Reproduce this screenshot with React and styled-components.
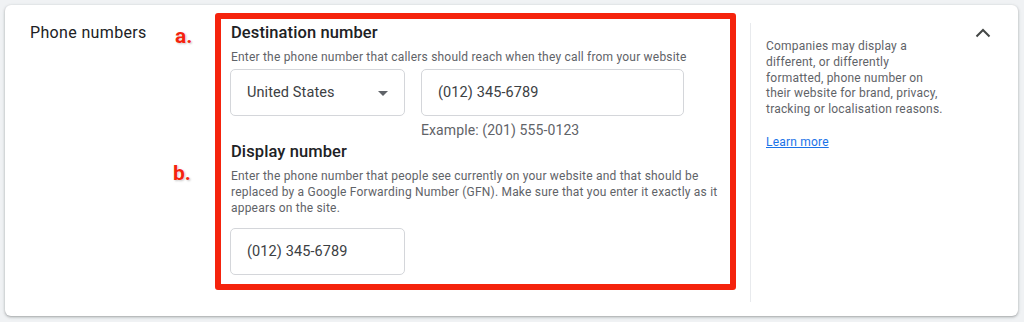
import React from "react";
import styled, { createGlobalStyle } from "styled-components";

const Global = createGlobalStyle`
  html, body { margin: 0; padding: 0; background: #f0f2f4; }
  body { font-family: Roboto, "Noto Sans", Arial, sans-serif; }
  * { box-sizing: border-box; }
`;

const Page = styled.div`
  width: 1024px;
  height: 322px;
  padding: 5px 6px 0 5px;
`;

const Card = styled.section`
  display: flex;
  align-items: flex-start;
  height: 311px;
  background: #fff;
  border-radius: 6px;
  box-shadow: 0 1px 2px rgba(60, 64, 67, 0.3), 0 1px 3px 1px rgba(60, 64, 67, 0.12);
  padding: 8px 0 0 25px;
`;

const Label = styled.div`
  width: 140px;
  margin-top: 10px;
  font-size: 16px;
  line-height: 20px;
  color: #202124;
  letter-spacing: 0.35px;
`;

const Markers = styled.div`
  width: 45px;
  display: flex;
  flex-direction: column;
`;

const Marker = styled.span`
  font-family: Roboto, Arial, sans-serif;
  font-weight: 700;
  font-size: 21px;
  line-height: 24px;
  color: #f5230d;
  padding-left: ${(p) => p.$x}px;
  margin-top: ${(p) => p.$top}px;
  text-shadow: 0 0 2px #fff, 1px 1px 2px rgba(0, 0, 0, 0.25);
`;

const Highlight = styled.div`
  width: 521px;
  height: 277px;
  border: 6px solid #f5230d;
  border-radius: 3px;
  padding: 4px 8px 0 9px;
`;

const Title = styled.h3`
  margin: 0 0 0 1px;
  font-weight: 500;
  font-size: 16.5px;
  line-height: 20px;
  color: #202124;
  letter-spacing: 0.1px;
`;

const Desc = styled.p`
  margin: 6px 0 0 1px;
  font-size: 12px;
  line-height: 16px;
  color: #5f6368;
  letter-spacing: 0.2px;
  max-width: ${(p) => p.$w || 500}px;
`;

const Row = styled.div`
  display: flex;
  gap: 16px;
  margin-top: ${(p) => p.$top || 4}px;
`;

const Field = styled.div`
  position: relative;
  width: ${(p) => p.$w}px;
  height: 47px;
  border: 1px solid #d4d6da;
  border-radius: 5px;
  display: flex;
  align-items: center;
  padding-left: 16px;
  font-size: 14.5px;
  color: #3c4043;
  letter-spacing: 0.1px;
`;

const Caret = styled.span`
  position: absolute;
  right: 16px;
  top: 21px;
  width: 0;
  height: 0;
  border-left: 5px solid transparent;
  border-right: 5px solid transparent;
  border-top: 5px solid #5f6368;
`;

const Hint = styled.div`
  margin: 4px 0 0 191px;
  font-size: 14px;
  line-height: 20px;
  color: #5f6368;
  letter-spacing: 0.1px;
`;

const Spacer = styled.div`
  height: 2px;
`;

const Divider = styled.div`
  width: 1px;
  height: 279px;
  margin: 10px 0 0 14px;
  background: #e8eaed;
`;

const Side = styled.div`
  width: 180px;
  margin: 26px 0 0 15px;
  font-size: 12px;
  line-height: 15.8px;
  color: #5f6368;
  letter-spacing: 0.2px;
`;

const LearnMore = styled.a`
  display: inline-block;
  margin-top: 17px;
  color: #1a73e8;
  text-decoration: underline;
  cursor: pointer;
`;

const Toggle = styled.button`
  margin: 8px 0 0 25px;
  width: 24px;
  height: 24px;
  padding: 0;
  border: 0;
  background: none;
  display: flex;
  align-items: center;
  justify-content: center;
`;

export default function App() {
  return (
    <Page>
      <Global />
      <Card>
        <Label>Phone numbers</Label>
        <Markers>
          <Marker $x={5} $top={11}>a.</Marker>
          <Marker $x={3} $top={113}>b.</Marker>
        </Markers>
        <Highlight>
          <Title>Destination number</Title>
          <Desc>
            Enter the phone number that callers should reach when they call from your website
          </Desc>
          <Row>
            <Field $w={175}>
              United States
              <Caret />
            </Field>
            <Field $w={263}>(012) 345-6789</Field>
          </Row>
          <Hint>Example: (201) 555-0123</Hint>
          <Spacer />
          <Title>Display number</Title>
          <Desc $w={492}>
            Enter the phone number that people see currently on your website and that should be
            replaced by a Google Forwarding Number (GFN). Make sure that you enter it exactly as it
            appears on the site.
          </Desc>
          <Row $top={12}>
            <Field $w={175}>(012) 345-6789</Field>
          </Row>
        </Highlight>
        <Divider />
        <Side>
          Companies may display a different, or differently formatted, phone number on their
          website for brand, privacy, tracking or localisation reasons.
          <br />
          <LearnMore>Learn more</LearnMore>
        </Side>
        <Toggle aria-label="Collapse">
          <svg width="16" height="10" viewBox="0 0 16 10">
            <path d="M1.5 8.5 L8 2 L14.5 8.5" fill="none" stroke="#444746" strokeWidth="2" />
          </svg>
        </Toggle>
      </Card>
    </Page>
  );
}
